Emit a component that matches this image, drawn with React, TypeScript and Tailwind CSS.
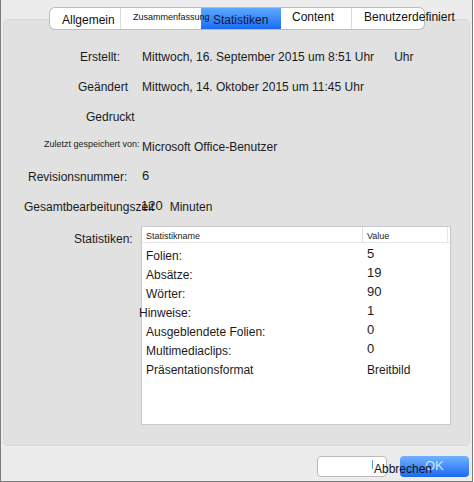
const tabs = [
  { label: "Allgemein", width: "w-[70px]", text: "pl-[12px] pt-[5px] text-[12px] leading-[14px]", active: false },
  { label: "Zusammenfassung", width: "w-[81px]", text: "relative z-10 pl-[12px] pt-[4px] text-[9px] leading-[11px]", active: false },
  { label: "Statistiken", width: "w-[80px]", text: "pl-[12px] pt-[5px] text-[12px] leading-[14px]", active: true },
  { label: "Content", width: "w-[70px]", text: "pl-[11px] pt-[2px] text-[12px] leading-[14px]", active: false },
  { label: "Benutzerdefiniert", width: "w-[73px]", text: "pl-[12px] pt-[2px] text-[12px] leading-[14px]", active: false }
];

const stats = [
  { name: "Folien:", value: "5", tone: "text-[#2e1219]" },
  { name: "Absätze:", value: "19" },
  { name: "Wörter:", value: "90" },
  { name: "Hinweise:", value: "1", shift: true, tone: "text-[#24122c]" },
  { name: "Ausgeblendete Folien:", value: "0" },
  { name: "Multimediaclips:", value: "0" },
  { name: "Präsentationsformat", value: "Breitbild", small: true }
];

function Tick() {
  return <span className="mr-px inline-block h-[12px] w-px bg-[#e6ddd0] align-middle" />;
}

export default function App() {
  return (
    <div className="h-[482px] w-[473px] border-x border-b border-[#7d7d7d] bg-[#ececec] font-['Liberation_Sans',Arial,sans-serif] text-[12px] text-[#1b1b1b]">
      <div className="px-[2px] pt-[19px]">
        <div className="h-[427px] rounded-[5px] border border-[#d8d8d8] bg-[#e1e1e1]">
          <div className="-mt-[12px] ml-[46px] flex h-[21px] w-[374px] rounded-[5px] bg-white ring-1 ring-[#bdbdbd]">
            {tabs.map((tab, i) => (
              <div
                className={`${tab.width} h-full shrink-0 whitespace-nowrap ${
                  tab.active
                    ? "bg-linear-to-b from-[#5ea8ff] to-[#1b6bf6] text-[#0f1a3a]"
                    : "text-[#111]"
                } ${i > 0 && !tab.active && !tabs[i - 1].active ? "border-l border-[#dcdcdc]" : ""} ${
                  i === 0 ? "rounded-l-[5px]" : ""
                } ${i === tabs.length - 1 ? "rounded-r-[5px]" : ""}`}
                key={tab.label}
              >
                <div className={tab.text}>{tab.label}</div>
              </div>
            ))}
          </div>

          <div className="mt-[13px]">
            <div className="flex h-[30px] items-center whitespace-nowrap">
              <div className="w-[138px] shrink-0 pl-[76px]">Erstellt:</div>
              <div>Mittwoch, 16. September 2015 um 8:51 Uhr</div>
              <div className="ml-[20px]">Uhr</div>
            </div>
            <div className="flex h-[30px] items-center whitespace-nowrap">
              <div className="w-[138px] shrink-0 pl-[72px]">
                <Tick />
                Geändert
              </div>
              <div>Mittwoch, 14. Oktober 2015 um 11:45 Uhr</div>
            </div>
            <div className="flex h-[30px] items-center whitespace-nowrap">
              <div className="w-[138px] shrink-0 pl-[80px]">
                <Tick />
                Gedruckt
              </div>
            </div>
            <div className="flex h-[30px] items-center whitespace-nowrap">
              <div className="-mt-[4px] w-[138px] shrink-0 pl-[40px] text-[9px]">Zuletzt gespeichert von:</div>
              <div>Microsoft Office-Benutzer</div>
            </div>
            <div className="flex h-[30px] items-center whitespace-nowrap">
              <div className="w-[138px] shrink-0 pl-[22px]">
                <Tick />
                Revisionsnummer:
              </div>
              <div className="-mt-[3px] text-[13px]">6</div>
            </div>
            <div className="flex h-[30px] items-center whitespace-nowrap">
              <div className="w-[138px] shrink-0 pl-[18px]">
                <Tick />
                Gesamtbearbeitungszeit
              </div>
              <div className="-ml-[1px] -mt-[3px] text-[13px]">120</div>
              <div className="ml-[7px]">Minuten</div>
            </div>

            <div className="mt-[4px] flex">
              <div className="w-[137px] shrink-0 pl-[70px] pt-[4px]">Statistiken:</div>
              <div className="h-[199px] w-[310px] border border-[#c9c9c9] bg-white">
                <div className="flex h-[16px] items-center border-b border-[#e8e8e8] text-[9px]">
                  <div className="h-full w-[221px] border-r border-[#e0e0e0] pl-[4px] pt-[3px]">Statistikname</div>
                  <div className="h-full w-[85px] border-r border-[#e6e6e6] pl-[4px] pt-[3px]">Value</div>
                </div>
                <div className="pt-[3px]">
                  {stats.map((row) => (
                    <div className="flex h-[19px] items-center whitespace-nowrap" key={row.name}>
                      <div className={`w-[221px] shrink-0 pl-[4px] ${row.tone ?? ""}`}>
                        <span className={row.shift ? "relative -left-[7px]" : ""}>{row.name}</span>
                      </div>
                      <div className={`pl-[4px] ${row.small ? "text-[12px]" : "-mt-[3px] text-[13px]"}`}>
                        {row.value}
                      </div>
                    </div>
                  ))}
                </div>
              </div>
            </div>
          </div>
        </div>
      </div>

      <div className="mt-[10px] flex justify-end gap-[13px] pr-[3px]">
        <div className="relative h-[21px] w-[70px] rounded-[4px] border border-[#b9b9b9] bg-white">
          <span className="absolute left-[54px] top-[3px] h-[9px] w-px bg-[#5a9be6]" />
          <span className="absolute left-[56px] top-[5px] z-10 whitespace-nowrap leading-[14px] text-[#111]">
            Abbrechen
          </span>
        </div>
        <div className="h-[21px] w-[69px] rounded-[4px] bg-linear-to-b from-[#70b2ff] to-[#1c67f1] pl-[25px] pt-[2px] text-[13px] leading-[16px] text-[#d4e5ff]">
          OK
        </div>
      </div>
    </div>
  );
}
